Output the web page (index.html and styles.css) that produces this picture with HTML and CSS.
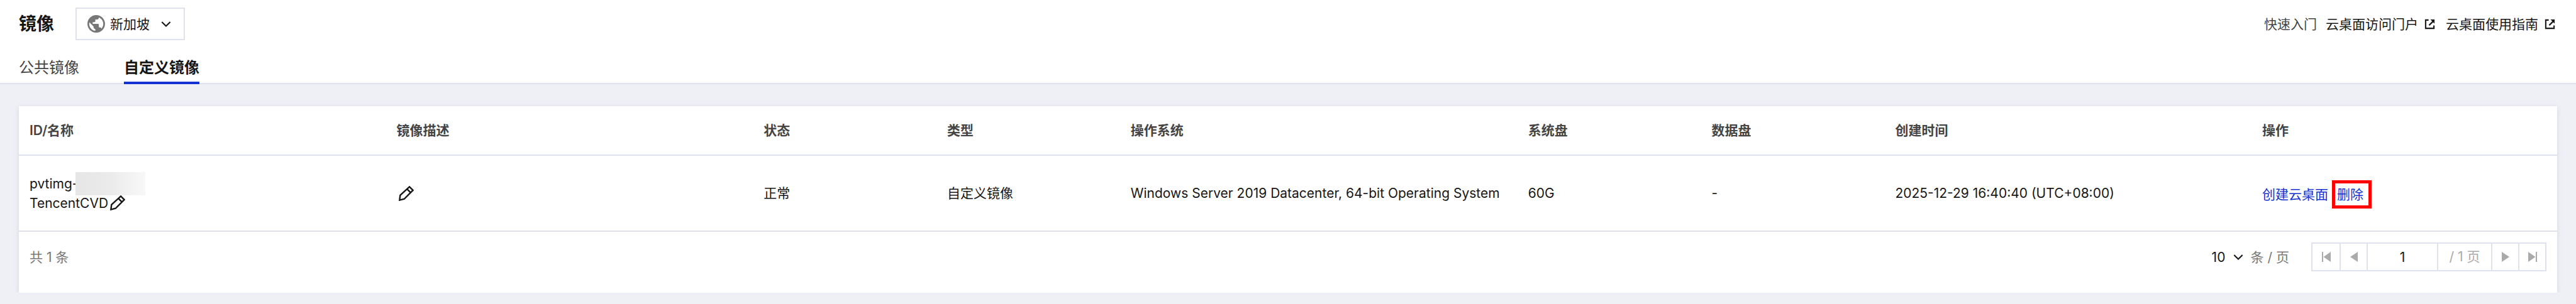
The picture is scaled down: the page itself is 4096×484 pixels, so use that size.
FILE: index.html
```html
<!DOCTYPE html>
<html lang="zh-CN">
<head>
    <meta charset="UTF-8">
    <meta name="viewport" content="width=device-width, initial-scale=1.0">
    <title>镜像</title>
    <link rel="stylesheet" href="styles.css">
</head>
<body>
    <!-- Shared icons -->
    <svg class="icon-defs" aria-hidden="true">
        <symbol id="icon-pencil" viewBox="0 0 26 26">
            <path d="M1.500 24.500l1-8.500L18.500 1.500 24.500 7.500 9.500 22.500z M14.500 5.500l6 6" fill="none" stroke="currentColor" stroke-width="2.600"/>
        </symbol>
        <symbol id="icon-external" viewBox="0 0 18 18">
            <path d="M7 2H2v14h14v-5" fill="none" stroke="currentColor" stroke-width="2.200"/>
            <path d="M10 1h7v7l-2.300-2.300-6 6-1.700-1.700 6-6z" fill="currentColor"/>
        </symbol>
        <symbol id="icon-chevron" viewBox="0 0 18 12">
            <path d="M1.500 2l7.500 7.500L16.500 2" fill="none" stroke="currentColor" stroke-width="2.400"/>
        </symbol>
    </svg>

    <header class="page-header">
        <div class="title-bar">
            <h1>镜像</h1>
            <div class="region">
                <svg class="region-globe" viewBox="2 2 20 20" aria-hidden="true">
                    <path d="M12 2C6.480 2 2 6.480 2 12s4.480 10 10 10 10-4.480 10-10S17.520 2 12 2zm-1 17.930c-3.950-.49-7-3.850-7-7.930 0-.62.080-1.210.210-1.790L9 15v1c0 1.100.900 2 2 2v1.930zm6.900-2.540c-.26-.81-1-1.390-1.900-1.390h-1v-3c0-.55-.45-1-1-1H8v-2h2c.55 0 1-.45 1-1V7h2c1.100 0 2-.9 2-2v-.41c2.930 1.190 5 4.060 5 7.410 0 2.080-.8 3.970-2.100 5.390z" fill="currentColor"/>
                </svg>
                <select aria-label="地域">
                    <option>新加坡</option>
                </select>
                <svg class="chevron" aria-hidden="true"><use href="#icon-chevron"/></svg>
            </div>
            <div class="quick-links">
                <span>快速入门</span>
                <a href="#">云桌面访问门户<svg class="external" aria-hidden="true"><use href="#icon-external"/></svg></a>
                <a href="#">云桌面使用指南<svg class="external" aria-hidden="true"><use href="#icon-external"/></svg></a>
            </div>
        </div>
        <nav class="tabs">
            <a href="#">公共镜像</a>
            <a href="#" class="active">自定义镜像</a>
        </nav>
    </header>

    <main class="card">
        <table class="image-table">
            <colgroup>
                <col class="col-wide">
                <col class="col-wide">
                <col class="col-small">
                <col class="col-small">
                <col class="col-os">
                <col class="col-small">
                <col class="col-small">
                <col class="col-wide">
                <col>
            </colgroup>
            <thead>
                <tr>
                    <th>ID/名称</th>
                    <th>镜像描述</th>
                    <th>状态</th>
                    <th>类型</th>
                    <th>操作系统</th>
                    <th>系统盘</th>
                    <th>数据盘</th>
                    <th>创建时间</th>
                    <th>操作</th>
                </tr>
            </thead>
            <tbody>
                <tr>
                    <td>
                        <div class="image-id">pvtimg-<span class="masked"></span></div>
                        <div class="image-name">TencentCVD<button class="edit" aria-label="编辑名称"><svg><use href="#icon-pencil"/></svg></button></div>
                    </td>
                    <td><button class="edit" aria-label="编辑描述"><svg><use href="#icon-pencil"/></svg></button></td>
                    <td>正常</td>
                    <td>自定义镜像</td>
                    <td>Windows Server 2019 Datacenter, 64-bit Operating System</td>
                    <td>60G</td>
                    <td>-</td>
                    <td>2025-12-29 16:40:40 (UTC+08:00)</td>
                    <td>
                        <div class="actions">
                            <a href="#">创建云桌面</a>
                            <a href="#" class="highlight">删除</a>
                        </div>
                    </td>
                </tr>
            </tbody>
        </table>

        <div class="table-footer">
            <span class="total">共 1 条</span>
            <div class="page-size">
                <select id="pageSize">
                    <option>10</option>
                </select>
                <svg class="chevron" aria-hidden="true"><use href="#icon-chevron"/></svg>
                <label for="pageSize">条 / 页</label>
            </div>
            <div class="pager">
                <button aria-label="首页" disabled><svg viewBox="0 0 16 16"><path d="M1 0h2v16H1zM15 0v16L3.500 8z"/></svg></button>
                <button aria-label="上一页" disabled><svg viewBox="0 0 16 16"><path d="M14 0v16L2 8z"/></svg></button>
                <input type="text" value="1" aria-label="页码">
                <span class="page-count">/ 1 页</span>
                <button aria-label="下一页" disabled><svg viewBox="0 0 16 16"><path d="M2 0v16l12-8z"/></svg></button>
                <button aria-label="末页" disabled><svg viewBox="0 0 16 16"><path d="M13 0h2v16h-2zM1 0v16l11.500-8z"/></svg></button>
            </div>
        </div>
    </main>
</body>
</html>
```

FILE: styles.css
```css
/* Reset and Base Styles */
* {
    margin: 0;
    padding: 0;
    box-sizing: border-box;
}

body {
    background-color: #eff0f6;
    color: #161616;
    font-family: Inter, "Noto Sans CJK SC", sans-serif;
    font-size: 21px;
    line-height: 31px;
}

a {
    color: inherit;
    text-decoration: none;
}

button,
input,
select {
    font: inherit;
    color: inherit;
    background: none;
    border: none;
    border-radius: 0;
}

select {
    appearance: none;
    cursor: pointer;
}

svg {
    display: block;
    fill: currentColor;
}

.icon-defs {
    position: absolute;
    width: 0;
    height: 0;
}

.chevron {
    width: 16px;
    height: 11px;
}

/* Page Header */
.page-header {
    background: #fff;
    border-bottom: 2px solid #dfe2ed;
    padding: 12px 30px 0;
}

.title-bar {
    display: flex;
    align-items: center;
}

.title-bar h1 {
    font-size: 28px;
    font-weight: 700;
}

.region {
    display: flex;
    align-items: center;
    height: 52px;
    margin-left: 34px;
    padding: 0 20px 0 17px;
    border: 2px solid #dfe2ed;
}

.region-globe {
    width: 28px;
    height: 28px;
    margin-right: 8px;
    color: #777;
}

.region .chevron {
    margin-left: 18px;
}

.quick-links {
    display: flex;
    gap: 14px;
    margin-left: auto;
}

.quick-links span {
    color: #444;
}

.quick-links a {
    display: flex;
    align-items: center;
    gap: 10px;
    padding-right: 3px;
}

.external {
    width: 17px;
    height: 17px;
}

/* Tabs */
.tabs {
    display: flex;
    gap: 71px;
    padding-top: 24px;
    font-size: 24px;
    line-height: 40px;
}

.tabs a {
    height: 46px;
    margin-bottom: -2px;
    color: #444;
}

.tabs .active {
    color: #161616;
    font-weight: 700;
    border-bottom: 4px solid #1432d2;
}

/* Card */
.card {
    margin: 35px 30px 0;
    background: #fff;
    box-shadow: 0 2px 8px rgba(54, 58, 80, 0.12);
}

/* Image Table */
.image-table {
    width: 100%;
    table-layout: fixed;
    border-collapse: collapse;
}

.col-wide {
    width: 14.46%;
}

.col-small {
    width: 7.23%;
}

.col-os {
    width: 15.66%;
}

.image-table th,
.image-table td {
    padding: 0 17px;
    border-bottom: 2px solid #dfe2ed;
    text-align: left;
    vertical-align: middle;
    white-space: nowrap;
}

.image-table th {
    height: 78px;
    color: #444;
    font-weight: 600;
}

.image-table td {
    height: 121px;
}

.image-id,
.image-name {
    display: flex;
    align-items: center;
    height: 31px;
}

.masked {
    width: 111px;
    height: 37px;
    margin-left: -4px;
    background: linear-gradient(to right, #e6e6e6, #ebebec 50%, #f8f8f8);
}

.edit {
    display: block;
    padding: 0 3px;
    cursor: pointer;
}

.edit svg {
    width: 24px;
    height: 24px;
}

/* Row Actions */
.actions {
    display: flex;
    align-items: center;
    gap: 6px;
    padding-top: 3px;
    color: #1432d2;
}

.actions .highlight {
    border: 5px solid #f00;
    padding: 2px 8px 2px 3px;
}

/* Footer and Pagination */
.table-footer {
    display: flex;
    align-items: center;
    padding: 17px 17px 34px;
    color: #777;
}

.total {
    margin-right: auto;
}

.page-size {
    display: flex;
    align-items: center;
    gap: 12px;
    margin-right: 35px;
}

.page-size select,
.page-size .chevron {
    color: #161616;
}

.pager {
    display: flex;
    height: 46px;
    border: 2px solid #dfe2ed;
}

.pager > * + * {
    border-left: 2px solid #dfe2ed;
}

.pager button {
    width: 43px;
    display: flex;
    align-items: center;
    justify-content: center;
    color: #aaa;
}

.pager button svg {
    width: 16px;
    height: 16px;
}

.pager input {
    width: 112px;
    color: #161616;
    text-align: center;
}

.page-count {
    width: 86px;
    line-height: 42px;
    text-align: center;
    color: #aaa;
}
```
